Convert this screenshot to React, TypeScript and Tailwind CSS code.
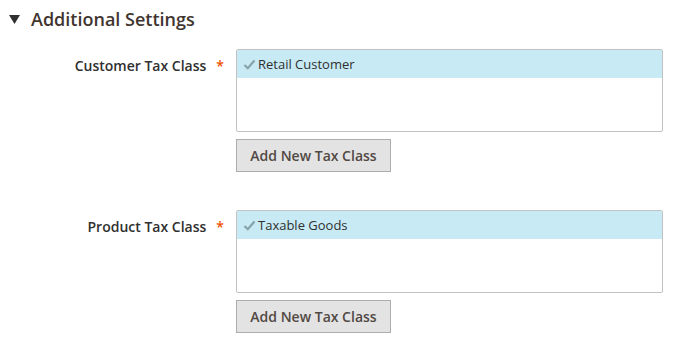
import React from 'react'

interface TaxFieldProps {
  label: string
  selected: string
}

function TaxField({ label, selected }: TaxFieldProps): React.JSX.Element {
  return (
    <div className="flex">
      {/* Label column */}
      <div className="flex w-[236px] justify-end pr-[12px] pt-[7px]">
        <span className="text-[14px] font-semibold leading-[20px] text-[#303030]">{label}</span>
        <span className="ml-[10px] text-[14px] font-semibold leading-[20px] text-[#eb5202]">*</span>
      </div>

      {/* Control column */}
      <div className="flex flex-col">
        <div className="h-[83px] w-[427px] overflow-hidden rounded-[2px] border border-[#c2c2c2] bg-white">
          <div className="flex h-[28px] items-center bg-[#c7eaf4] pl-[6px]">
            <svg width="13" height="11" viewBox="0 0 13 11" className="mr-[2px]">
              <path
                d="M1.5 6 L4.8 9.2 L11.5 1.5"
                fill="none"
                stroke="#86a3aa"
                strokeWidth="2.2"
                strokeLinejoin="miter"
              />
            </svg>
            <span className="text-[13px] leading-[20px] text-[#303030]">{selected}</span>
          </div>
        </div>
        <button
          type="button"
          className="mt-[7px] h-[33px] w-[155px] border border-[#adadad] bg-[#e3e3e3] text-[14px] font-semibold text-[#514943]"
        >
          Add New Tax Class
        </button>
      </div>
    </div>
  )
}

export default function App(): React.JSX.Element {
  return (
    <div className="h-[350px] w-[677px] bg-white font-['Open_Sans',sans-serif]">
      {/* Section header */}
      <div className="flex h-[38px] items-center pl-[9px]">
        <svg width="11" height="9" viewBox="0 0 11 9" className="mr-[11px]">
          <polygon points="0,0 11,0 5.5,9" fill="#303030" />
        </svg>
        <span className="text-[18px] font-semibold text-[#41362f]">Additional Settings</span>
      </div>

      <div className="mt-[11px] flex flex-col gap-[38px]">
        <TaxField label="Customer Tax Class" selected="Retail Customer" />
        <TaxField label="Product Tax Class" selected="Taxable Goods" />
      </div>
    </div>
  )
}
